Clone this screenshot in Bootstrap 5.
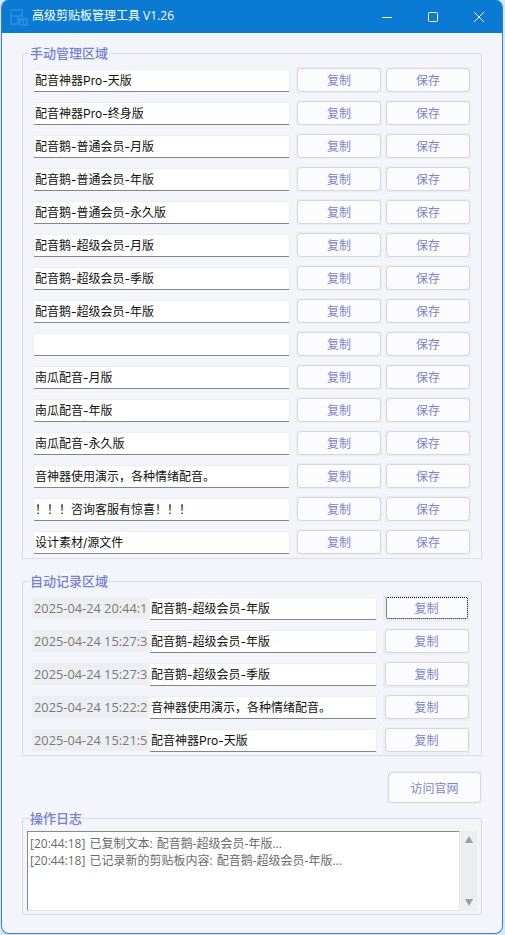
<!DOCTYPE html>
<html lang="zh-CN">
<head>
<meta charset="utf-8">
<title>高级剪贴板管理工具 V1.26</title>
<link href="https://cdn.jsdelivr.net/npm/bootstrap@5.3.0/dist/css/bootstrap.min.css" rel="stylesheet">
<style>
html,body{height:100%;margin:0;overflow:hidden}
body{background:#d6e8f6;font-family:"Open Sans","Noto Sans CJK SC",sans-serif;font-size:12px;line-height:1.2}
.win{width:502px;height:934px;margin-left:1px;background:#f3f5fa;border:1px solid #3a82bf;border-top:0;border-radius:7px 7px 8px 8px;overflow:hidden;box-sizing:border-box}
.titlebar{height:33px;background:#0a7ad2;color:#fff;font-size:12px;padding-left:8px}
.tb-name{margin-left:4px}
.tb-b{width:46px;height:33px}
.zone{padding:11px 20px 0 20px}
.grp{border:1px solid #dcdee5;margin:0;padding:5px 10px 3px 10px;min-width:0}
.grp+.grp{margin-top:13px;padding:5px 10px 2px 9px}
.grp legend{float:none;width:auto;font-size:13px;line-height:18px;color:#7580d6;font-weight:500;margin:0 0 0 -3px;padding:0}
.grp+.grp legend{margin-left:-2px}
.rw{height:26px;margin-bottom:7px}
.rw:last-child{margin-bottom:0}
.field{flex:none;height:23px;background:#fff;border:1px solid #eceef2;border-bottom:1px solid #858585;border-radius:2px;padding:0 1px;line-height:22px;font-family:Inter,"Noto Sans CJK SC",sans-serif;font-size:12px;color:#111;white-space:nowrap;overflow:hidden}
.f1{width:257px}
.f2{width:228px;margin-left:1px}
.bwrap{flex:0 0 86px;height:26px;background:#eceef4;padding:1px;margin-left:6px}
.bwrap.b2{margin-left:3px}
.bwrap.b3{flex-basis:87px;height:27px;padding:1.5px}
.act{display:block;width:100%;height:100%;padding:2px 0 0;background:#fcfcfe;border:1px solid #d6d7de;border-radius:4px;color:#7a84d2;font-size:12px;line-height:1}
.act:hover{background:#fcfcfe;color:#7a84d2;border-color:#d6d7de}
.act.focused{width:calc(100% - 2px);height:calc(100% - 2px);margin:1px;border:1px dotted #000;border-radius:2px}
.stamp{flex:0 0 116px;height:22px;background:#edeef1;color:#7a7a7a;font-size:12.8px;line-height:22px;padding-left:2px;white-space:nowrap;overflow:hidden}
.site-row{height:33px;margin:15px 0 0}
.site{width:95px;height:33px;background:#eceef4;padding:1px}
.grp.log-grp{margin-top:5px;padding:4px 4px 3px 4px}
.grp.log-grp legend{margin-left:3px}
.logarea{height:80px;margin:0;gap:1px}
.logtext{width:433px;background:#fff;border:1px solid;border-color:#8a8a8a #e5e5e5 #e5e5e5 #8a8a8a;padding:3px 2px;color:#6b6b6b;font-size:12px;line-height:17px;word-spacing:1px;white-space:nowrap;overflow:hidden}
.sbar{width:16px;background:#eeeeee;padding:5px 0}
.tri-u,.tri-d{width:0;height:0;border-left:4.5px solid transparent;border-right:4.5px solid transparent}
.tri-u{border-bottom:7px solid #9e9e9e}
.tri-d{border-top:7px solid #9e9e9e}
</style>
</head>
<body>
<div class="win">
  <div class="titlebar d-flex align-items-center">
    <svg width="18" height="18" viewBox="0 0 18 18" fill="none" stroke="#2a90e6" stroke-width="1.6"><path d="M1 2h11v6H1zM1 8v8h7V8M10 11h7v6h-7zM13.500 11v6"/></svg>
    <span class="tb-name">高级剪贴板管理工具 V1.26</span>
    <div class="ms-auto d-flex">
      <div class="tb-b d-flex align-items-center justify-content-center"><svg width="12" height="12" viewBox="0 0 12 12"><path d="M1 6.500h10" stroke="#fff" fill="none"/></svg></div>
      <div class="tb-b d-flex align-items-center justify-content-center"><svg width="12" height="12" viewBox="0 0 12 12"><rect x="1.500" y="1.500" width="9" height="9" rx="1" stroke="#fff" fill="none"/></svg></div>
      <div class="tb-b d-flex align-items-center justify-content-center"><svg width="12" height="12" viewBox="0 0 12 12"><path d="M1 1l10 10M11 1L1 11" stroke="#fff" fill="none"/></svg></div>
    </div>
  </div>
  <div class="zone">
    <fieldset class="grp">
      <legend>手动管理区域</legend>
      <div class="rw d-flex align-items-center"><div class="field f1">配音神器Pro-天版</div><div class="bwrap"><button class="btn act">复制</button></div><div class="bwrap b2"><button class="btn act">保存</button></div></div>
      <div class="rw d-flex align-items-center"><div class="field f1">配音神器Pro-终身版</div><div class="bwrap"><button class="btn act">复制</button></div><div class="bwrap b2"><button class="btn act">保存</button></div></div>
      <div class="rw d-flex align-items-center"><div class="field f1">配音鹅-普通会员-月版</div><div class="bwrap"><button class="btn act">复制</button></div><div class="bwrap b2"><button class="btn act">保存</button></div></div>
      <div class="rw d-flex align-items-center"><div class="field f1">配音鹅-普通会员-年版</div><div class="bwrap"><button class="btn act">复制</button></div><div class="bwrap b2"><button class="btn act">保存</button></div></div>
      <div class="rw d-flex align-items-center"><div class="field f1">配音鹅-普通会员-永久版</div><div class="bwrap"><button class="btn act">复制</button></div><div class="bwrap b2"><button class="btn act">保存</button></div></div>
      <div class="rw d-flex align-items-center"><div class="field f1">配音鹅-超级会员-月版</div><div class="bwrap"><button class="btn act">复制</button></div><div class="bwrap b2"><button class="btn act">保存</button></div></div>
      <div class="rw d-flex align-items-center"><div class="field f1">配音鹅-超级会员-季版</div><div class="bwrap"><button class="btn act">复制</button></div><div class="bwrap b2"><button class="btn act">保存</button></div></div>
      <div class="rw d-flex align-items-center"><div class="field f1">配音鹅-超级会员-年版</div><div class="bwrap"><button class="btn act">复制</button></div><div class="bwrap b2"><button class="btn act">保存</button></div></div>
      <div class="rw d-flex align-items-center"><div class="field f1"></div><div class="bwrap"><button class="btn act">复制</button></div><div class="bwrap b2"><button class="btn act">保存</button></div></div>
      <div class="rw d-flex align-items-center"><div class="field f1">南瓜配音-月版</div><div class="bwrap"><button class="btn act">复制</button></div><div class="bwrap b2"><button class="btn act">保存</button></div></div>
      <div class="rw d-flex align-items-center"><div class="field f1">南瓜配音-年版</div><div class="bwrap"><button class="btn act">复制</button></div><div class="bwrap b2"><button class="btn act">保存</button></div></div>
      <div class="rw d-flex align-items-center"><div class="field f1">南瓜配音-永久版</div><div class="bwrap"><button class="btn act">复制</button></div><div class="bwrap b2"><button class="btn act">保存</button></div></div>
      <div class="rw d-flex align-items-center"><div class="field f1">音神器使用演示，各种情绪配音。</div><div class="bwrap"><button class="btn act">复制</button></div><div class="bwrap b2"><button class="btn act">保存</button></div></div>
      <div class="rw d-flex align-items-center"><div class="field f1">！！！咨询客服有惊喜！！！</div><div class="bwrap"><button class="btn act">复制</button></div><div class="bwrap b2"><button class="btn act">保存</button></div></div>
      <div class="rw d-flex align-items-center"><div class="field f1">设计素材/源文件</div><div class="bwrap"><button class="btn act">复制</button></div><div class="bwrap b2"><button class="btn act">保存</button></div></div>
    </fieldset>
    <fieldset class="grp">
      <legend>自动记录区域</legend>
      <div class="rw d-flex align-items-center"><div class="stamp">2025-04-24 20:44:18</div><div class="field f2">配音鹅-超级会员-年版</div><div class="bwrap b3"><button class="btn act focused">复制</button></div></div>
      <div class="rw d-flex align-items-center"><div class="stamp">2025-04-24 15:27:34</div><div class="field f2">配音鹅-超级会员-年版</div><div class="bwrap b3"><button class="btn act">复制</button></div></div>
      <div class="rw d-flex align-items-center"><div class="stamp">2025-04-24 15:27:31</div><div class="field f2">配音鹅-超级会员-季版</div><div class="bwrap b3"><button class="btn act">复制</button></div></div>
      <div class="rw d-flex align-items-center"><div class="stamp">2025-04-24 15:22:29</div><div class="field f2">音神器使用演示，各种情绪配音。</div><div class="bwrap b3"><button class="btn act">复制</button></div></div>
      <div class="rw d-flex align-items-center"><div class="stamp">2025-04-24 15:21:58</div><div class="field f2">配音神器Pro-天版</div><div class="bwrap b3"><button class="btn act">复制</button></div></div>
    </fieldset>
    <div class="site-row d-flex justify-content-end"><div class="site"><button class="btn act">访问官网</button></div></div>
    <fieldset class="grp log-grp">
      <legend>操作日志</legend>
      <div class="logarea d-flex">
        <div class="logtext">[20:44:18] 已复制文本: 配音鹅-超级会员-年版...<br>[20:44:18] 已记录新的剪贴板内容: 配音鹅-超级会员-年版...</div>
        <div class="sbar d-flex flex-column justify-content-between align-items-center"><div class="tri-u"></div><div class="tri-d"></div></div>
      </div>
    </fieldset>
  </div>
</div>
<script src="https://cdn.jsdelivr.net/npm/bootstrap@5.3.0/dist/js/bootstrap.bundle.min.js"></script>
</body>
</html>
